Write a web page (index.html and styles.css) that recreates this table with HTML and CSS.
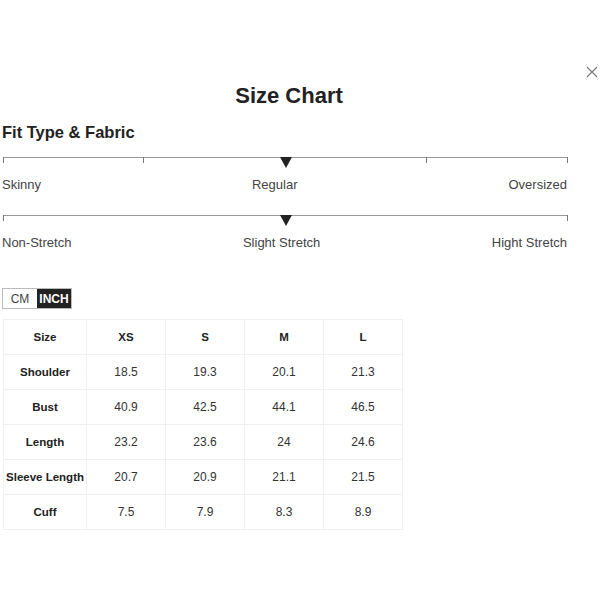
FILE: index.html
```html
<!DOCTYPE html>
<html>
<head>
<meta charset="utf-8">
<link rel="stylesheet" href="styles.css">
</head>
<body>
<div class="modal">
  <button class="close" aria-label="Close">
    <svg width="12" height="12" viewBox="0 0 12 12"><path d="M1 1L11 11M11 1L1 11" stroke="#777" stroke-width="1.1" fill="none"/></svg>
  </button>
  <h1 class="title">Size Chart</h1>
  <h2 class="subtitle">Fit Type &amp; Fabric</h2>

  <div class="scale">
    <span class="tick" style="left:0%"></span>
    <span class="tick" style="left:25%"></span>
    <span class="tick" style="left:75%"></span>
    <span class="tick" style="left:100%"></span>
    <span class="marker" style="left:50%"></span>
  </div>
  <div class="labels"><span>Skinny</span><span>Regular</span><span>Oversized</span></div>

  <div class="scale second">
    <span class="tick" style="left:0%"></span>
    <span class="tick" style="left:100%"></span>
    <span class="marker" style="left:50%"></span>
  </div>
  <div class="labels"><span>Non-Stretch</span><span>Slight Stretch</span><span>Hight Stretch</span></div>

  <div class="toggle"><span class="unit">CM</span><span class="unit active">INCH</span></div>

  <table class="chart">
    <tr><th>Size</th><th>XS</th><th>S</th><th>M</th><th>L</th></tr>
    <tr><th>Shoulder</th><td>18.5</td><td>19.3</td><td>20.1</td><td>21.3</td></tr>
    <tr><th>Bust</th><td>40.9</td><td>42.5</td><td>44.1</td><td>46.5</td></tr>
    <tr><th>Length</th><td>23.2</td><td>23.6</td><td>24</td><td>24.6</td></tr>
    <tr><th>Sleeve Length</th><td>20.7</td><td>20.9</td><td>21.1</td><td>21.5</td></tr>
    <tr><th>Cuff</th><td>7.5</td><td>7.9</td><td>8.3</td><td>8.9</td></tr>
  </table>
</div>
</body>
</html>
```
FILE: styles.css
```css
* { box-sizing: border-box; }
body {
  margin: 0;
  background: #fff;
  font-family: "Liberation Sans", Arial, sans-serif;
  color: #333;
}
.modal {
  position: relative;
  width: 600px;
  height: 600px;
  padding: 83px 0 0 2px;
}
.close {
  position: absolute;
  top: 66px;
  right: 2px;
  width: 12px;
  height: 12px;
  padding: 0;
  border: 0;
  background: none;
  display: flex;
}
.title {
  margin: 0;
  width: 574px;
  text-align: center;
  font-size: 22px;
  line-height: 26px;
  font-weight: bold;
  color: #222;
}
.subtitle {
  margin: 13px 0 0;
  font-size: 16.5px;
  line-height: 20px;
  font-weight: bold;
  color: #222;
}
.scale {
  position: relative;
  width: 565px;
  height: 20px;
  margin: 15px 0 0 1px;
  border-top: 1px solid #999;
}
.scale.second { margin-top: 22px; }
.tick {
  position: absolute;
  top: -1px;
  width: 1px;
  height: 6px;
  background: #777;
  margin-left: -1px;
}
.tick:first-child { margin-left: 0; }
.marker {
  position: absolute;
  top: -1px;
  margin-left: -6px;
  width: 0;
  height: 0;
  border-left: 6px solid transparent;
  border-right: 6px solid transparent;
  border-top: 11px solid #222;
}
.labels {
  display: flex;
  justify-content: space-between;
  width: 565px;
  font-size: 13px;
  line-height: 16px;
  color: #444;
}
.toggle {
  display: flex;
  margin-top: 37px;
  width: 70px;
  height: 21px;
  border: 1px solid #bbb;
}
.unit {
  flex: 1;
  display: flex;
  align-items: center;
  justify-content: center;
  font-size: 12px;
  color: #444;
}
.unit.active {
  background: #222;
  color: #fff;
  font-weight: bold;
}
.chart {
  margin: 10px 0 0 1px;
  border-collapse: collapse;
  width: 400px;
  font-size: 12px;
  text-align: center;
}
.chart th, .chart td {
  height: 35px;
  padding: 0;
  border: 1px solid #f0f0f0;
  color: #333;
}
.chart th { font-weight: bold; color: #222; font-size: 11.5px; }
.chart th:first-child { width: 83px; }
```
